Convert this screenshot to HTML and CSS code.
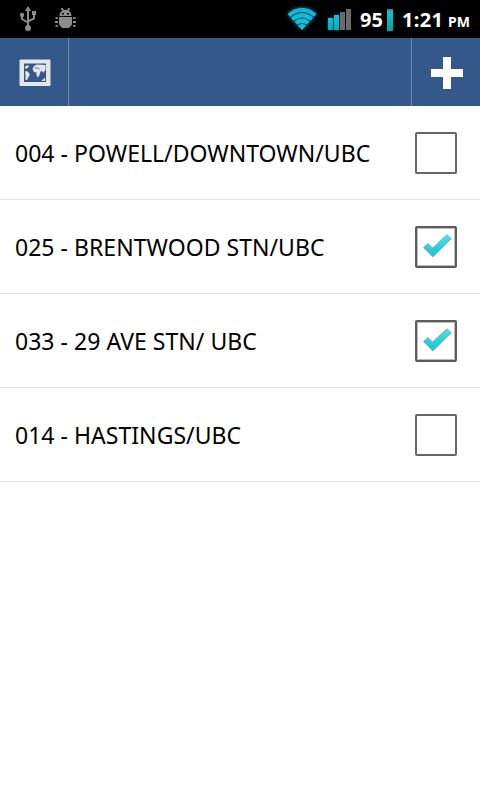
FILE: index.html
```
<!doctype html>
<html lang="en">
<head>
    <meta charset="utf-8">
    <meta name="viewport" content="width=device-width, initial-scale=1">
    <title>Bus Routes</title>
    <link rel="stylesheet" href="styles.css">
</head>
<body>
    <div class="status-bar">
        <svg class="usb" width="18" height="26" viewBox="0 0 18 26" fill="none" stroke="#8c8c8c" stroke-width="2">
            <path d="M9 4v17M3 8.500v4.500L9 16.500M15 7.500v5L9 15.500"/>
            <path d="M9 0l3 5H6z" fill="#8c8c8c" stroke="none"/>
            <circle cx="3" cy="9" r="2.200" fill="#8c8c8c" stroke="none"/>
            <path d="M13 5h4v4h-4z" fill="#8c8c8c" stroke="none"/>
            <circle cx="9" cy="22" r="3" fill="#8c8c8c" stroke="none"/>
        </svg>
        <svg class="android" width="21" height="20" viewBox="0 0 21 20" fill="#8c8c8c">
            <path d="M4.500 8c0-3.500 2.300-6 6-6s6 2.500 6 6zM4 9h13v7.500l-3 3.500H7l-3-3.500z"/>
            <path d="M6.500 0l2 3M14.500 0l-2 3M3 10.200H.5M3 14H0M3 17.800H.5M18 10.200h2.500M18 14h3M18 17.800h2.500" fill="none" stroke="#8c8c8c" stroke-width="1.800"/>
            <path d="M7 5h2v1.500H7zM12 5h2v1.500h-2z" fill="#000"/>
        </svg>
        <svg class="wifi" width="30" height="24" viewBox="0 0 30 24">
            <defs>
                <linearGradient id="blue" x2="0" y2="1">
                    <stop offset="0" stop-color="#10b4d8"/>
                    <stop offset="1" stop-color="#10c4dc"/>
                </linearGradient>
            </defs>
            <path d="M.5 7Q15-5.500 29.500 7L15 23z" fill="url(#blue)"/>
            <path d="M3 10.500Q15 .5 27 10.500M6.500 14.500Q15 7.500 23.500 14.500M10 18.500Q15 14.500 20 18.500" fill="none" stroke="#00465a" stroke-width="1.100"/>
        </svg>
        <div class="signal">
            <span class="bar bar-1 on"></span>
            <span class="bar bar-2 on"></span>
            <span class="bar bar-3"></span>
            <span class="bar bar-4"></span>
        </div>
        <span class="percent">95</span>
        <span class="battery"></span>
        <span class="clock">1:21</span>
        <span class="meridiem">PM</span>
    </div>

    <div class="action-bar">
        <div class="action map">
            <svg width="32" height="28" viewBox="0 0 32 28">
                <rect x=".5" y=".5" width="31" height="26.500" rx="1" fill="#e4e6e9"/>
                <path d="M5 4.500h22v18.500H5z" fill="#35588a"/>
                <path d="M6 7.500l3-1.500 1 1.500-2 2H6zM6 12.500l2-.5 3 3-1 2-2 4H6.500V17zM13.500 10l1.500-3 3-1.500 8.500.5v5l-1 1-1 2-1.500-2-1.500.5-1 3.500-1.500 2.500-1.500-2v-3l-2.500-.5zM22.500 22l3.500-3.500V22z" fill="#e4e6e9"/>
                <path d="M16 9h3l1.500 1" fill="none" stroke="#35588a" stroke-width=".8"/>
            </svg>
        </div>
        <div class="action add">
            <svg width="32" height="32" viewBox="0 0 32 32" fill="#fff">
                <path d="M12 0h8v12h12v8H20v12h-8V20H0v-8h12z"/>
            </svg>
        </div>
    </div>

    <div class="route-list">
        <div class="route">
            <span class="name">004 - POWELL/DOWNTOWN/UBC</span>
            <span class="checkbox"></span>
        </div>
        <div class="route">
            <span class="name">025 - BRENTWOOD STN/UBC</span>
            <span class="checkbox checked">
                <svg width="30" height="26" viewBox="0 0 30 26">
                    <defs>
                        <linearGradient id="tick" x2="0" y2="1">
                            <stop offset="0" stop-color="#48e2e4"/>
                            <stop offset="1" stop-color="#12c4d8"/>
                        </linearGradient>
                    </defs>
                    <path d="M1.500 13.500L6 9.500l4.500 4.500L25 .7l4.300 4L10.800 23z" fill="url(#tick)" stroke="#889c9e" stroke-width=".8"/>
                </svg>
            </span>
        </div>
        <div class="route">
            <span class="name">033 - 29 AVE STN/ UBC</span>
            <span class="checkbox checked">
                <svg width="30" height="26" viewBox="0 0 30 26">
                    <path d="M1.500 13.500L6 9.500l4.500 4.500L25 .7l4.300 4L10.800 23z" fill="url(#tick)" stroke="#889c9e" stroke-width=".8"/>
                </svg>
            </span>
        </div>
        <div class="route">
            <span class="name">014 - HASTINGS/UBC</span>
            <span class="checkbox"></span>
        </div>
    </div>
</body>
</html>
```
FILE: styles.css
```
* {
    box-sizing: border-box;
}
body {
    margin: 0;
    background: #fff;
    color: #000;
    font-family: "Noto Sans", "Open Sans", sans-serif;
}
svg {
    display: block;
    flex: none;
}

/* Status bar */
.status-bar {
    display: flex;
    height: 38px;
    padding: 0 9px 0 19px;
    background: #000;
    color: #fff;
    font-size: 20px;
    font-weight: bold;
    line-height: 40px;
}
.usb {
    margin-top: 6px;
}
.android {
    margin: 8px 0 0 18px;
}
.wifi {
    margin: 7px 11px 0 auto;
    filter: drop-shadow(0 0 2px #007088);
}
.signal {
    display: flex;
    align-items: flex-end;
    gap: 1px;
    width: 23px;
    height: 30px;
    margin-right: 9px;
}
.bar {
    width: 5px;
    background: #6a6a6a;
}
.bar.on {
    background: linear-gradient(#10c4dc, #10a8b4);
    box-shadow: 0 0 3px #007088;
}
.bar-1 { height: 12px; }
.bar-2 { height: 15px; }
.bar-3 { height: 18px; }
.bar-4 { height: 21px; }
.percent {
    width: 27px;
}
.battery {
    width: 6px;
    height: 22px;
    margin: 9px 9px 0 0;
    border-top: 2px solid #777;
    background: linear-gradient(#00c8dc, #00a0a8);
}
.clock {
    width: 46px;
    letter-spacing: 0.3px;
}
.meridiem {
    width: 23px;
    font-size: 14px;
    line-height: 44px;
}

/* Action bar */
.action-bar {
    display: flex;
    justify-content: space-between;
    height: 68px;
    background: #35588a;
}
.action {
    width: 69px;
}
.map {
    padding: 21px 0 0 19px;
    border-right: 1px solid #7189ad;
}
.add {
    padding: 19px 0 0 19px;
    border-left: 1px solid #7189ad;
}

/* Routes */
.route {
    display: flex;
    align-items: center;
    justify-content: space-between;
    height: 94px;
    padding: 0 23px 0 15px;
    border-bottom: 1px solid #e1e1e1;
}
.name {
    font-size: 23px;
    line-height: 34px;
    letter-spacing: 0.03px;
    white-space: nowrap;
}
.checkbox {
    width: 42px;
    height: 42px;
    border: 2px solid #666;
    border-radius: 2px;
}
.checked {
    padding: 6px 0 0 5px;
    border-color: #5c5c5c;
    box-shadow: inset 0 0 0 1px #bbb;
}
```
